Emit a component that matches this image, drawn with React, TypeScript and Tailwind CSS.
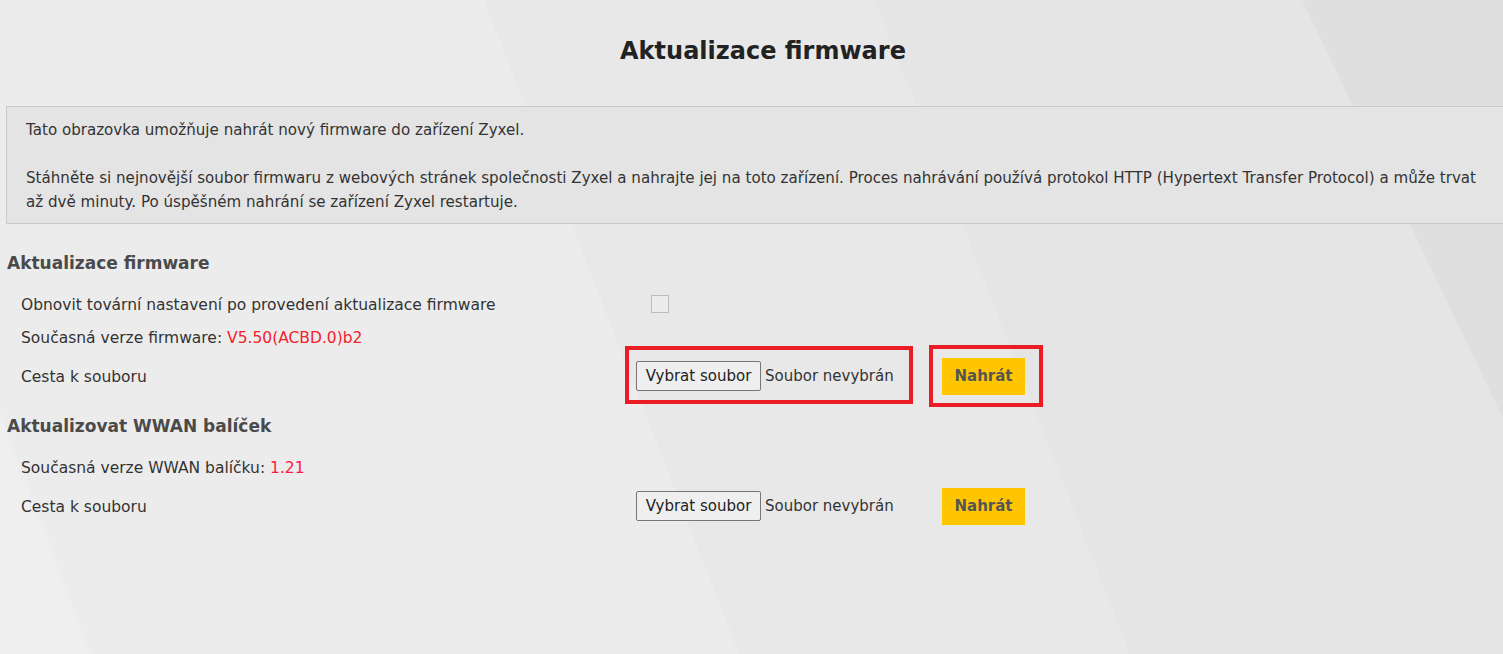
import React from 'react'

const font = { fontFamily: '"DejaVu Sans", sans-serif' }

function Background() {
  return (
    <svg className="absolute inset-0 h-full w-full" viewBox="0 0 1503 654" preserveAspectRatio="none">
      <rect width="1503" height="654" fill="#ececec" />
      <polygon points="484,0 1503,0 1503,654 739,654" fill="#e8e8e8" />
      <polygon points="875,0 1503,0 1503,654 1130,654" fill="#e5e5e5" />
      <polygon points="1302,0 1503,0 1503,418" fill="#dfdfdf" />
      <polygon points="0,412 0,654 90,654" fill="#efefef" />
    </svg>
  )
}

function FilePicker({ marked }: { marked?: boolean }) {
  return (
    <span className="relative inline-flex w-[262px] items-center">
      <span className="inline-flex h-[30px] w-[125px] items-center justify-center rounded-[2px] border border-[#767676] bg-[#efefef] text-[15px] text-[#222]">
        Vybrat soubor
      </span>
      <span className="ml-[4px] text-[15px] text-[#333]">Soubor nevybrán</span>
      {marked && (
        <span className="pointer-events-none absolute -top-[15px] -bottom-[13px] -left-[11px] -right-[15px] border-4 border-[#ec1c24]" />
      )}
    </span>
  )
}

function UploadButton({ marked }: { marked?: boolean }) {
  return (
    <span className="relative ml-[44px] inline-flex">
      <span className="inline-flex h-[37px] w-[83px] items-center justify-center bg-[#ffc600] text-[15px] font-bold text-[#555]">
        Nahrát
      </span>
      {marked && (
        <span className="pointer-events-none absolute -top-[13px] -bottom-[12px] -left-[13px] -right-[18px] border-4 border-[#ec1c24]" />
      )}
    </span>
  )
}

function Row({ label, children, h }: { label: React.ReactNode; children?: React.ReactNode; h: string }) {
  return (
    <div className={`flex items-center ${h}`}>
      <div className="w-[630px] shrink-0 pt-[4px] pl-[15px] text-[15.5px] text-[#333]">{label}</div>
      <div className="flex items-center">{children}</div>
    </div>
  )
}

export default function App() {
  return (
    <div className="relative h-[654px] w-full overflow-hidden" style={font}>
      <Background />
      <div className="relative ml-[6px] w-[1514px]">
        <h1 className="flex h-[100px] items-center justify-center pt-[2px] text-[24px] font-bold text-[#222]">
          Aktualizace firmware
        </h1>
        <div className="mt-[6px] border border-[#c9c9c9] bg-[#e4e4e4] px-[19px] pt-[11px] pb-[9px] text-[15.1px] leading-[24px] text-[#333]">
          <p>Tato obrazovka umožňuje nahrát nový firmware do zařízení Zyxel.</p>
          <p className="mt-[24px]">
            Stáhněte si nejnovější soubor firmwaru z webových stránek společnosti Zyxel a nahrajte jej na toto zařízení. Proces nahrávání používá protokol HTTP (Hypertext Transfer Protocol) a může trvat
            <br />
            až dvě minuty. Po úspěšném nahrání se zařízení Zyxel restartuje.
          </p>
        </div>

        <h2 className="mt-[25px] h-[28px] pl-[1px] text-[17px] leading-[28px] font-bold text-[#4a4a4a]">Aktualizace firmware</h2>
        <Row h="mt-[11px] h-[32px]" label="Obnovit tovární nastavení po provedení aktualizace firmware">
          <span className="ml-[15px] h-[18px] w-[18px] border border-[#bdbdbd] bg-[#ececec]" />
        </Row>
        <Row
          h="h-[34px]"
          label={
            <>
              Současná verze firmware: <span className="text-[#f5222d]">V5.50(ACBD.0)b2</span>
            </>
          }
        />
        <Row h="h-[44px]" label="Cesta k souboru">
          <FilePicker marked />
          <UploadButton marked />
        </Row>

        <h2 className="mt-[14px] h-[28px] pl-[1px] text-[17px] leading-[28px] font-bold text-[#4a4a4a]">Aktualizovat WWAN balíček</h2>
        <Row
          h="mt-[11px] h-[32px]"
          label={
            <>
              Současná verze WWAN balíčku: <span className="text-[#ff1744]">1.21</span>
            </>
          }
        />
        <Row h="h-[46px]" label="Cesta k souboru">
          <FilePicker />
          <UploadButton />
        </Row>
      </div>
    </div>
  )
}
